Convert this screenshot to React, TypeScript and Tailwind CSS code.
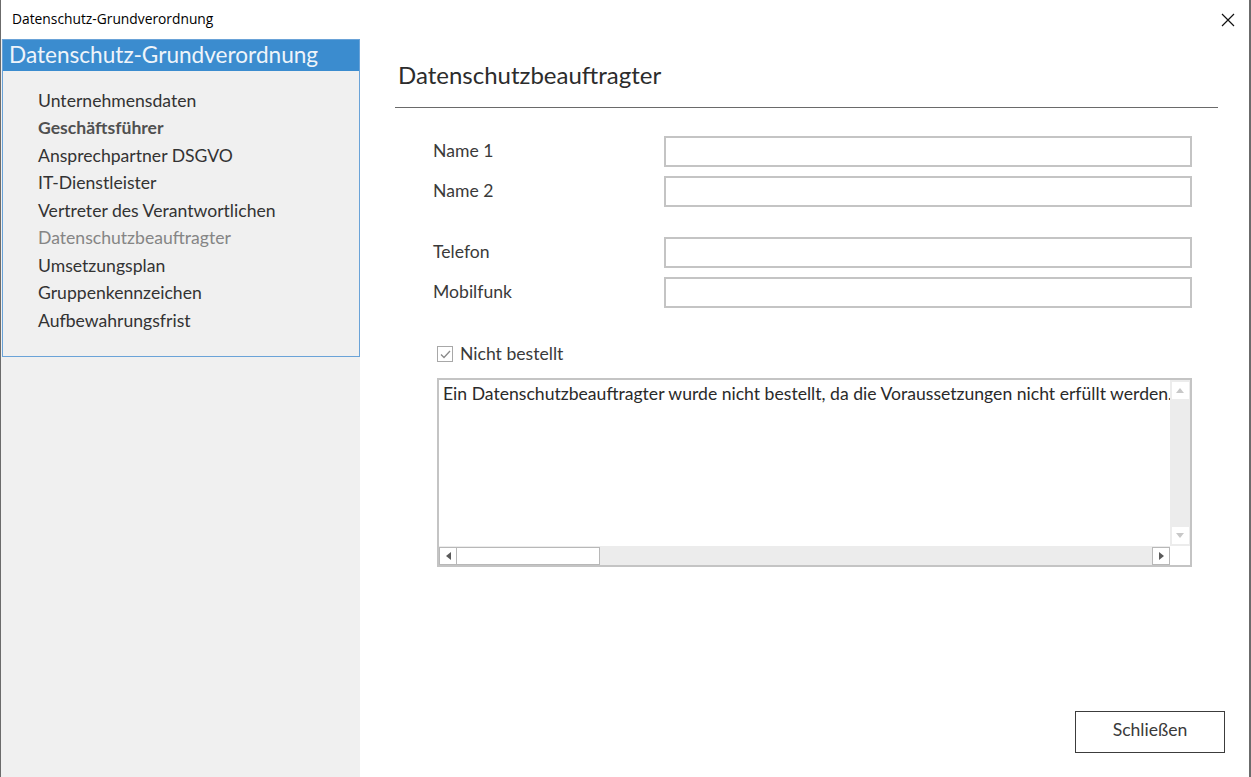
import React from "react";

const menu = [
  { label: "Unternehmensdaten", kind: "normal" },
  { label: "Geschäftsführer", kind: "bold" },
  { label: "Ansprechpartner DSGVO", kind: "normal" },
  { label: "IT-Dienstleister", kind: "normal" },
  { label: "Vertreter des Verantwortlichen", kind: "normal" },
  { label: "Datenschutzbeauftragter", kind: "active" },
  { label: "Umsetzungsplan", kind: "normal" },
  { label: "Gruppenkennzeichen", kind: "normal" },
  { label: "Aufbewahrungsfrist", kind: "normal" },
];

function Field({ label }: { label: string }) {
  return (
    <div className="flex items-center h-[31px]">
      <span className="w-[269px] pl-[38px] text-[17.6px] text-[#3a3a3a]">{label}</span>
      <div className="w-[528px] h-[31px] border-2 border-[#c4c4c4] bg-white" />
    </div>
  );
}

export default function App() {
  return (
    <div
      className="w-[1251px] h-[777px] flex flex-col bg-white border-l border-r-2 border-[#6b6b6b] overflow-hidden"
      style={{ fontFamily: "Lato, 'Open Sans', sans-serif" }}
    >
      {/* Titelleiste */}
      <div className="h-[39px] flex items-center justify-between pl-[11px] pr-[14px] shrink-0">
        <span className="text-[13.8px] text-black" style={{ fontFamily: "'Open Sans', sans-serif" }}>
          Datenschutz-Grundverordnung
        </span>
        <svg width="14" height="14" viewBox="0 0 14 14" className="mt-[1px]">
          <path d="M1 1 L13 13 M13 1 L1 13" stroke="#111" strokeWidth="1.2" />
        </svg>
      </div>

      <div className="flex flex-1 min-h-0">
        {/* Navigation */}
        <div className="w-[359px] bg-[#f0f0f0] pl-px shrink-0">
          <div className="w-[358px] h-[318px] border border-[#6aa3d8] flex flex-col">
            <div className="h-[31px] bg-[#3b8ccf] flex items-center pl-[6px]">
              <span className="text-[22.6px] text-[#eef4fa] leading-none -mt-[1px]">Datenschutz-Grundverordnung</span>
            </div>
            <ul className="pt-[16px] pl-[35px] flex flex-col">
              {menu.map((m) => (
                <li
                  key={m.label}
                  className={
                    "h-[27.5px] flex items-center text-[17.6px] " +
                    (m.kind === "bold"
                      ? "font-bold text-[#505050]"
                      : m.kind === "active"
                      ? "text-[#858585]"
                      : "text-[#333333]")
                  }
                >
                  {m.label}
                </li>
              ))}
            </ul>
          </div>
        </div>

        {/* Inhalt */}
        <div className="flex-1 flex flex-col pl-[35px] pr-[31px]">
          <h1 className="pt-[18px] pl-[3px] h-[69px] text-[24px] text-[#2c2c2c] border-b border-[#6a6a6a]">
            Datenschutzbeauftragter
          </h1>

          <div className="flex flex-col pt-[28px]">
            <Field label="Name 1" />
            <div className="h-[9px]" />
            <Field label="Name 2" />
            <div className="h-[30px]" />
            <Field label="Telefon" />
            <div className="h-[9px]" />
            <Field label="Mobilfunk" />
          </div>

          <label className="flex items-center gap-[7px] pl-[42px] mt-[37px] h-[18px]">
            <span className="w-[16px] h-[16px] border border-[#a8a8a8] bg-white flex items-center justify-center">
              <svg width="11" height="9" viewBox="0 0 11 9">
                <path d="M1 4.5 L4 7.5 L10 1" fill="none" stroke="#8a8a8a" strokeWidth="1.3" />
              </svg>
            </span>
            <span className="text-[17.6px] text-[#3a3a3a]">Nicht bestellt</span>
          </label>

          <div className="ml-[42px] mt-[15px] w-[755px] h-[189px] border-2 border-[#c4c4c4] flex flex-col bg-white">
            <div className="flex flex-1 min-h-0">
              <div className="flex-1 overflow-hidden whitespace-nowrap pl-[4px] pt-[1px] text-[17.6px] text-[#2a2a2a]">
                Ein Datenschutzbeauftragter wurde nicht bestellt, da die Voraussetzungen nicht erfüllt werden.
              </div>
              <div className="w-[20px] bg-[#ececec] flex flex-col justify-between py-[2px] items-center">
                <div className="w-[17px] h-[17px] bg-white flex items-center justify-center">
                  <svg width="8" height="5" viewBox="0 0 8 5"><path d="M0 5 L4 0 L8 5 Z" fill="#c8c8c8" /></svg>
                </div>
                <div className="w-[17px] h-[17px] bg-white flex items-center justify-center">
                  <svg width="8" height="5" viewBox="0 0 8 5"><path d="M0 0 L4 5 L8 0 Z" fill="#c8c8c8" /></svg>
                </div>
              </div>
            </div>
            <div className="h-[19px] flex">
              <div className="flex-1 bg-[#ececec] flex items-center">
                <div className="w-[18px] h-[18px] bg-white border border-[#b8b8b8] flex items-center justify-center">
                  <svg width="5" height="8" viewBox="0 0 5 8"><path d="M5 0 L0 4 L5 8 Z" fill="#5a5a5a" /></svg>
                </div>
                <div className="w-[143px] h-[18px] bg-white border border-[#b8b8b8] border-l-0" />
                <div className="flex-1" />
                <div className="w-[18px] h-[18px] bg-white border border-[#b8b8b8] flex items-center justify-center">
                  <svg width="5" height="8" viewBox="0 0 5 8"><path d="M0 0 L5 4 L0 8 Z" fill="#5a5a5a" /></svg>
                </div>
              </div>
              <div className="w-[20px] bg-white" />
            </div>
          </div>

          <div className="flex-1" />
          <div className="flex justify-end pb-[24px] -mr-[7px]">
            <button className="w-[150px] h-[42px] pb-[3px] border border-[#3c3c3c] bg-white text-[17.6px] text-[#3a3a3a]">
              Schließen
            </button>
          </div>
        </div>
      </div>
    </div>
  );
}
